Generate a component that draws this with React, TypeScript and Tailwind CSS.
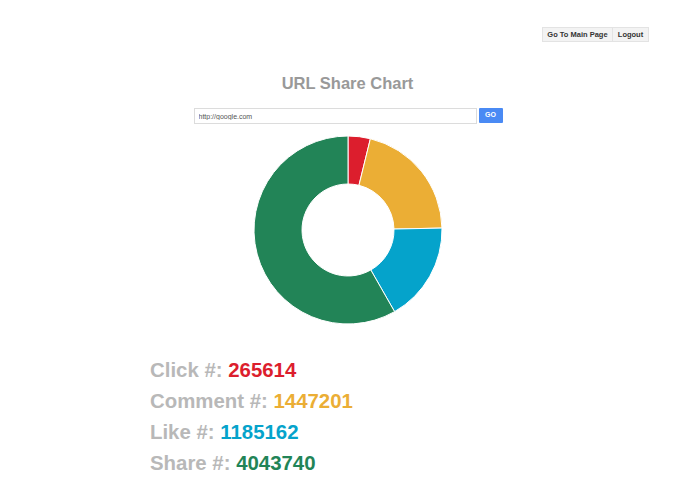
import React from 'react'

const stats = [
  { label: 'Click #:', value: 265614, color: '#dc1e2d' },
  { label: 'Comment #:', value: 1447201, color: '#ebae35' },
  { label: 'Like #:', value: 1185162, color: '#05a3cb' },
  { label: 'Share #:', value: 4043740, color: '#228457' },
]

function arcPath(cx: number, cy: number, R: number, r: number, a0: number, a1: number) {
  const p = (rad: number, a: number) => [cx + rad * Math.cos(a), cy + rad * Math.sin(a)]
  const [x0, y0] = p(R, a0)
  const [x1, y1] = p(R, a1)
  const [x2, y2] = p(r, a1)
  const [x3, y3] = p(r, a0)
  const large = a1 - a0 > Math.PI ? 1 : 0
  return `M${x0} ${y0} A${R} ${R} 0 ${large} 1 ${x1} ${y1} L${x2} ${y2} A${r} ${r} 0 ${large} 0 ${x3} ${y3} Z`
}

function Donut() {
  const total = stats.reduce((s, d) => s + d.value, 0)
  let a = -Math.PI / 2
  return (
    <svg width="190" height="190" viewBox="0 0 190 190">
      {stats.map((d) => {
        const a0 = a
        const a1 = a + (d.value / total) * Math.PI * 2
        a = a1
        return (
          <path key={d.label} d={arcPath(95, 95, 94, 46, a0, a1)} fill={d.color} stroke="#fff" strokeWidth="1" />
        )
      })}
    </svg>
  )
}

export default function App() {
  return (
    <div className="min-h-[494px] bg-white font-['Liberation_Sans',Arial,sans-serif]">
      {/* Top nav */}
      <div className="flex justify-end pt-[27px] pr-[46px]">
        <button className="h-[15px] w-[71px] border border-[#e3e3e3] bg-[#f3f3f3] text-[7.5px] font-bold text-[#333]">
          Go To Main Page
        </button>
        <button className="h-[15px] w-[36px] border border-l-0 border-[#e3e3e3] bg-[#f3f3f3] text-[7.5px] font-bold text-[#333]">
          Logout
        </button>
      </div>

      <h1 className="mt-[31px] text-center text-[16.5px] leading-[20px] font-bold text-[#999]">URL Share Chart</h1>

      {/* URL form */}
      <div className="mt-[15px] flex justify-center gap-[2px] pl-[1px]">
        <input
          defaultValue="http://google.com"
          className="h-[16px] w-[283px] border border-[#dcdcdc] px-[4px] text-[7px] text-[#555] outline-none"
        />
        <button className="h-[15px] w-[24px] rounded-[1px] bg-[#4a8af4] text-[7px] font-bold text-white">GO</button>
      </div>

      <div className="mt-[11px] flex justify-center">
        <Donut />
      </div>

      {/* Stats */}
      <div className="mt-[30px] pl-[150px]">
        {stats.map((d) => (
          <div key={d.label} className="text-[20.4px] leading-[31px] font-bold text-[#b8b8b8]">
            {d.label}{' '}
            <span style={{ color: d.color }}>{d.value}</span>
          </div>
        ))}
      </div>
    </div>
  )
}
